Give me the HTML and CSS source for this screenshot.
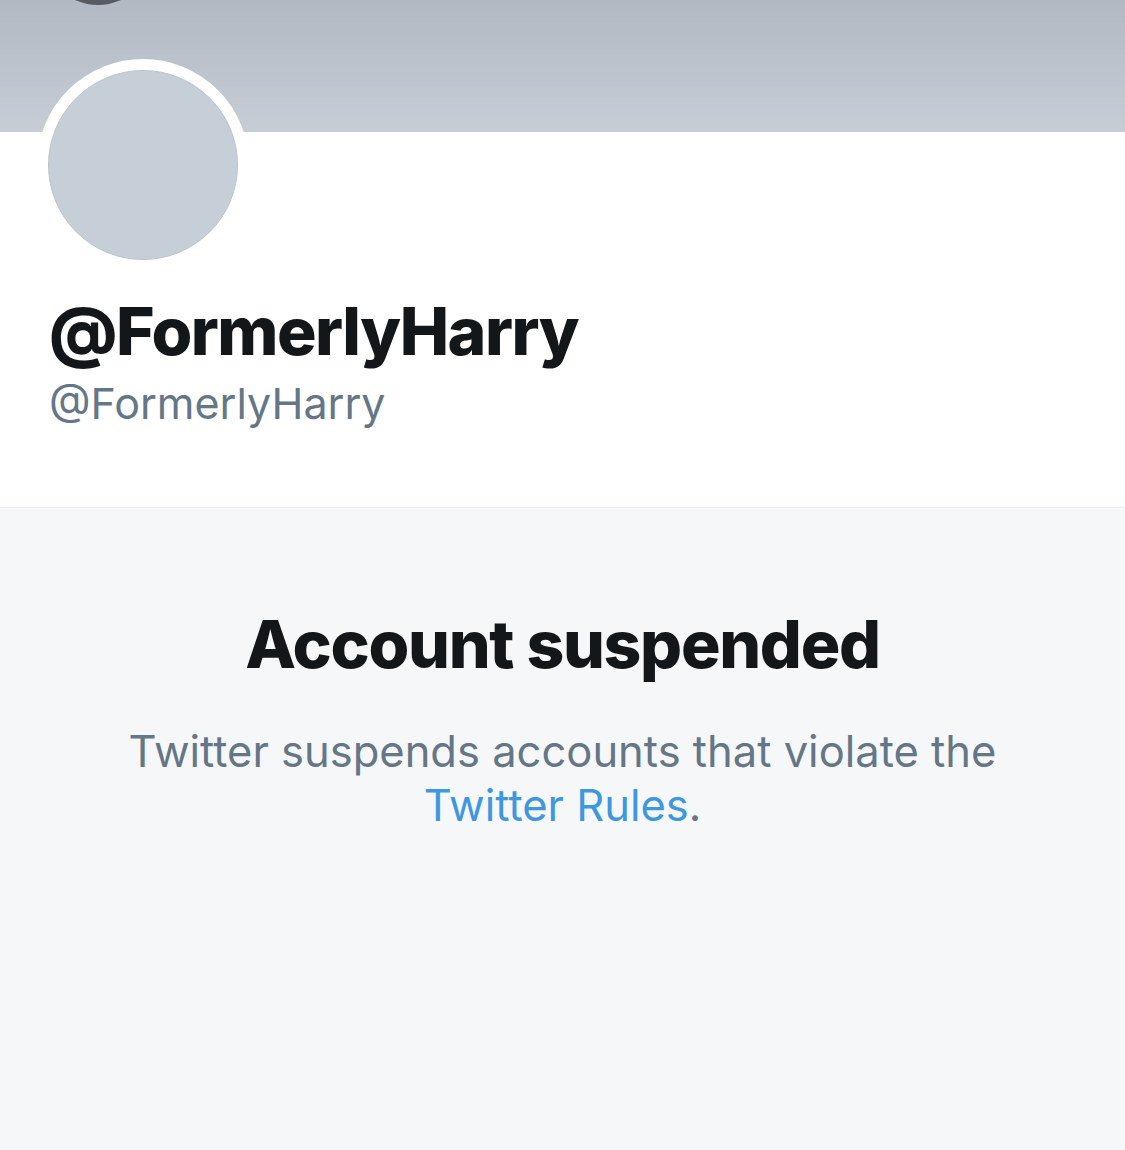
FILE: index.html
```html
<!DOCTYPE html>
<html lang="en">
<head>
<meta charset="utf-8">
<title>@FormerlyHarry</title>
<link rel="stylesheet" href="styles.css">
</head>
<body>
<div class="page">
  <header class="profile">
    <div class="banner">
      <span class="back-btn"></span>
    </div>
    <div class="avatar-ring"><div class="avatar"></div></div>
    <h1 class="display-name">@FormerlyHarry</h1>
    <div class="handle">@FormerlyHarry</div>
  </header>
  <section class="suspended">
    <h2 class="suspended-title">Account suspended</h2>
    <p class="suspended-text">Twitter suspends accounts that violate the <a class="rules-link" href="#">Twitter Rules</a>.</p>
  </section>
</div>
</body>
</html>
```

FILE: styles.css
```css
html, body {
  margin: 0;
  padding: 0;
  background: #f6f7f9;
}
.page {
  width: 1125px;
  min-height: 1150px;
  font-family: Inter, "Liberation Sans", sans-serif;
  display: flex;
  flex-direction: column;
}
.profile {
  background: #ffffff;
  height: 507px;
  display: flex;
  flex-direction: column;
  box-sizing: border-box;
}
.banner {
  position: relative;
  height: 132px;
  background: linear-gradient(to bottom, #b1b9c2 0%, #c6cdd5 100%);
  overflow: hidden;
  flex: none;
}
.back-btn {
  position: absolute;
  left: 43px;
  top: -105px;
  width: 110px;
  height: 110px;
  border-radius: 50%;
  background: #555b61;
}
.avatar-ring {
  position: relative;
  z-index: 1;
  width: 190px;
  height: 190px;
  margin: -73px 0 0 37px;
  border: 11px solid #ffffff;
  border-radius: 50%;
  background: #ffffff;
  flex: none;
}
.avatar {
  width: 100%;
  height: 100%;
  box-sizing: border-box;
  border-radius: 50%;
  background: #c6cfd7;
  border: 1px solid #bcc4cb;
}
.display-name {
  margin: 20px 0 0 49px;
  font-size: 66px;
  line-height: 80px;
  font-weight: 800;
  color: #14171a;
  letter-spacing: -1.5px;
}
.handle {
  margin: 4px 0 0 49px;
  font-size: 43px;
  line-height: 56px;
  font-weight: 400;
  color: #657786;
}
.suspended {
  flex: 1;
  background: #f6f7f9;
  border-top: 1px solid #eef0f3;
  display: flex;
  flex-direction: column;
  align-items: center;
  padding-top: 96px;
}
.suspended-title {
  margin: 0;
  font-size: 66px;
  line-height: 80px;
  font-weight: 800;
  color: #14171a;
  letter-spacing: -1.3px;
}
.suspended-text {
  margin: 40px 0 0;
  width: 900px;
  text-align: center;
  font-size: 43.5px;
  line-height: 54px;
  color: #657786;
}
.rules-link {
  color: #3f97e0;
  text-decoration: none;
}
```
